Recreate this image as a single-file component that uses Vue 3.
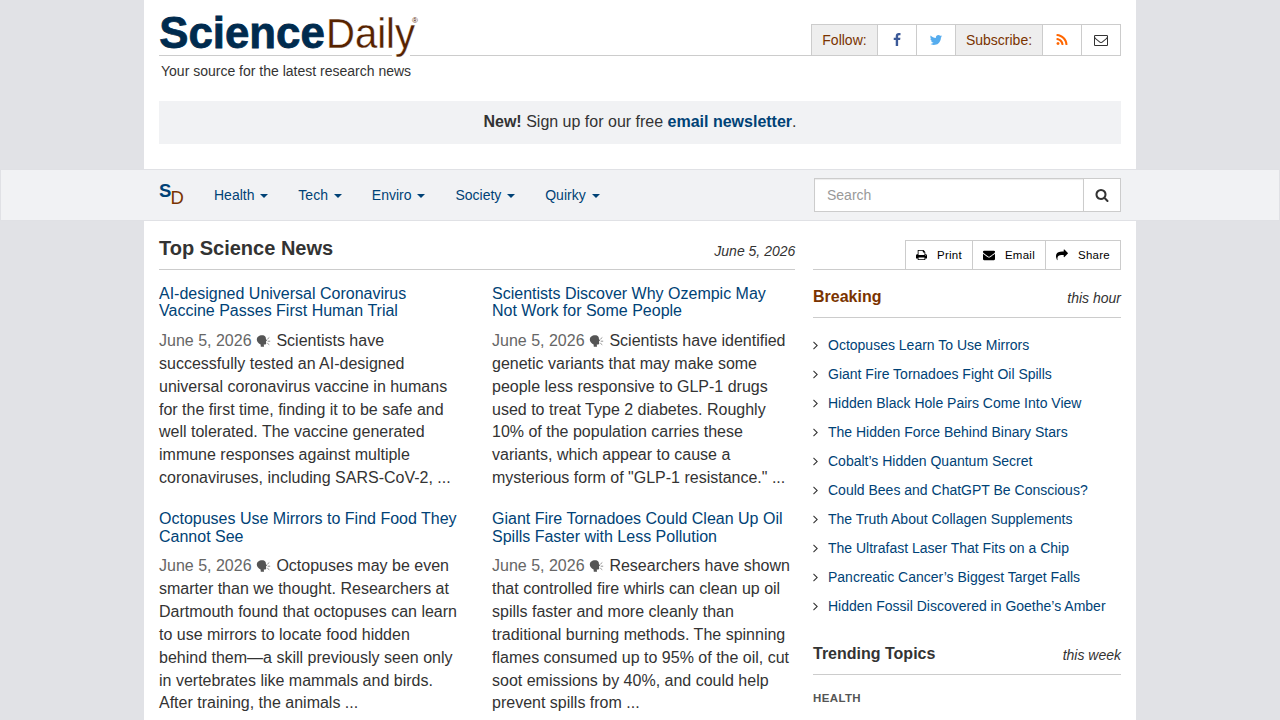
<script setup>
const icons = {
  facebook: 'M1343 12v264h-157q-86 0-116 36t-30 108v189h293l-39 296h-254v759h-306v-759h-255v-296h255v-218q0-186 104-288.500t277-102.500q147 0 228 12z',
  twitter: 'M1684 408q-67 98-162 167 1 14 1 42 0 130-38 259.500t-115.500 248.500-184.500 210.500-258 146-323 54.500q-271 0-496-145 35 4 78 4 225 0 401-138-105-2-188-64.500t-114-159.500q33 5 61 5 43 0 85-11-112-23-185.500-111.500t-73.500-205.500v-4q68 38 146 41-66-44-105-115t-39-154q0-88 44-163 121 149 294.500 238.500t371.500 99.500q-8-38-8-74 0-134 94.500-228.500t228.500-94.500q140 0 236 102 109-21 205-78-37 115-142 178 93-10 186-50z',
  rss: 'M576 1344q0 80-56 136t-136 56-136-56-56-136 56-136 136-56 136 56 56 136zm512 123q2 28-17 48-18 21-47 21h-135q-25 0-43-16.500t-20-41.500q-22-229-184.500-391.500t-391.500-184.500q-25-2-41.500-20t-16.500-43v-135q0-29 21-47 17-17 43-17h5q160 13 306 80.500t259 181.500q114 113 181.500 259t80.500 306zm512 2q2 27-18 47-18 20-46 20h-143q-26 0-44.500-17.500t-19.500-42.500q-12-215-101-408.500t-231.500-336-336-231.500-408.500-102q-25-1-42.500-19.500t-17.500-43.500v-143q0-28 20-46 18-18 44-18h3q262 13 501.500 120t425.500 294q187 186 294 425.500t120 501.500z',
  envelopeO: 'M1664 1504v-768q-32 36-69 66-268 206-426 338-51 43-83 67t-86.500 48.500-102.500 24.500h-2q-48 0-102.500-24.500t-86.500-48.500-83-67q-158-132-426-338-37-30-69-66v768q0 13 9.500 22.500t22.500 9.500h1472q13 0 22.500-9.500t9.500-22.500zm0-1051v-24.500l-.5-13-3-12.500-5.500-9-9-7.500-14-2.500h-1472q-13 0-22.500 9.500t-9.500 22.500q0 168 147 284 193 152 401 317 6 5 35 29.500t46 37.500 44.500 31.500 50.500 27.500 43 9h2q20 0 43-9t50.500-27.500 44.500-31.500 46-37.500 35-29.500q208-165 401-317 54-43 100.500-115.500t46.500-131.500zm128-37v1088q0 66-47 113t-113 47h-1472q-66 0-113-47t-47-113v-1088q0-66 47-113t113-47h1472q66 0 113 47t47 113z',
  search: 'M1216 832q0-185-131.500-316.500t-316.500-131.500-316.500 131.500-131.500 316.500 131.500 316.500 316.500 131.500 316.500-131.500 131.500-316.500zm512 832q0 52-38 90t-90 38q-54 0-90-38l-343-342q-179 124-399 124-143 0-273.500-55.500t-225-150-150-225-55.500-273.500 55.500-273.500 150-225 225-150 273.500-55.500 273.500 55.500 225 150 150 225 55.500 273.500q0 220-124 399l343 343q37 37 37 90z',
  print: 'M448 1536h896v-256h-896v256zm0-640h896v-384h-160q-40 0-68-28t-28-68v-160h-640v640zm1152 64q0-26-19-45t-45-19-45 19-19 45 19 45 45 19 45-19 19-45zm128 0v416q0 13-9.500 22.500t-22.500 9.500h-224v160q0 40-28 68t-68 28h-960q-40 0-68-28t-28-68v-160h-224q-13 0-22.500-9.500t-9.500-22.500v-416q0-79 56.500-135.500t135.500-56.500h64v-544q0-40 28-68t68-28h672q40 0 88 20t76 48l152 152q28 28 48 76t20 88v256h64q79 0 135.500 56.500t56.500 135.500z',
  envelope: 'M1792 710v794q0 66-47 113t-113 47h-1472q-66 0-113-47t-47-113v-794q44 49 101 87 362 246 497 345 57 42 92.500 65.500t94.500 48 110 24.500h2q51 0 110-24.500t94.500-48 92.500-65.500q170-123 498-345 57-39 100-87zm0-294q0 79-49 151t-122 123q-376 261-468 325-10 7-42.500 31t-54 38.500-52 32.500-57.500 27-50 9h-2q-23 0-50-9t-57.500-27-52-32.500-54-38.500-42.500-31q-91-64-262-182.500t-205-142.500q-62-42-117-115.500t-55-136.500q0-78 41.500-130t118.500-52h1472q65 0 112.500 47t47.500 113z',
  share: 'M1792 640q0 26-19 45l-512 512q-19 19-45 19t-45-19-19-45v-256h-224q-98 0-175.500 6t-154 21.500-133 42.500-105.500 69.500-80 101-48.500 138.500-17.500 181q0 55 5 123 0 6 2.500 23.500t2.500 26.500q0 15-8.500 25t-23.500 10q-16 0-28-17-7-9-13-22t-13.500-30-10.500-24q-127-285-127-451 0-199 53-333 162-403 875-403h224v-256q0-26 19-45t45-19 45 19l512 512q19 19 19 45z',
};

const menus = ['Health', 'Tech', 'Enviro', 'Society', 'Quirky'];

const tools = [
  { label: 'Print', icon: 'print' },
  { label: 'Email', icon: 'envelope' },
  { label: 'Share', icon: 'share' },
];

const stories = [
  {
    title: 'AI-designed Universal Coronavirus Vaccine Passes First Human Trial',
    text: 'Scientists have successfully tested an AI-designed universal coronavirus vaccine in humans for the first time, finding it to be safe and well tolerated. The vaccine generated immune responses against multiple coronaviruses, including SARS-CoV-2, ...',
  },
  {
    title: 'Scientists Discover Why Ozempic May Not Work for Some People',
    text: 'Scientists have identified genetic variants that may make some people less responsive to GLP-1 drugs used to treat Type 2 diabetes. Roughly 10% of the population carries these variants, which appear to cause a mysterious form of "GLP-1 resistance." ...',
  },
  {
    title: 'Octopuses Use Mirrors to Find Food They Cannot See',
    text: 'Octopuses may be even smarter than we thought. Researchers at Dartmouth found that octopuses can learn to use mirrors to locate food hidden behind them—a skill previously seen only in vertebrates like mammals and birds. After training, the animals ...',
  },
  {
    title: 'Giant Fire Tornadoes Could Clean Up Oil Spills Faster with Less Pollution',
    text: 'Researchers have shown that controlled fire whirls can clean up oil spills faster and more cleanly than traditional burning methods. The spinning flames consumed up to 95% of the oil, cut soot emissions by 40%, and could help prevent spills from ...',
  },
];

const breaking = [
  'Octopuses Learn To Use Mirrors',
  'Giant Fire Tornadoes Fight Oil Spills',
  'Hidden Black Hole Pairs Come Into View',
  'The Hidden Force Behind Binary Stars',
  'Cobalt’s Hidden Quantum Secret',
  'Could Bees and ChatGPT Be Conscious?',
  'The Truth About Collagen Supplements',
  'The Ultrafast Laser That Fits on a Chip',
  'Pancreatic Cancer’s Biggest Target Falls',
  'Hidden Fossil Discovered in Goethe’s Amber',
];
</script>

<template>
  <div class="page">
    <header class="container masthead">
      <div class="brand-row">
        <svg class="logo" width="262" height="60" viewBox="0 0 262 60">
          <rect class="logo-gap" x="233" y="54" width="18" height="3" />
          <text class="logo-science" x="0.300" y="48.300" textLength="165.500" lengthAdjust="spacingAndGlyphs">Science</text>
          <text class="logo-daily" x="167" y="47.800" textLength="89" lengthAdjust="spacingAndGlyphs">Daily</text>
          <text class="logo-mark" x="253" y="23">®</text>
        </svg>
        <div class="social">
          <span class="social-label follow">Follow:</span>
          <a class="social-btn"><svg class="icon facebook" viewBox="0 0 1792 1792"><path :d="icons.facebook" /></svg></a>
          <a class="social-btn"><svg class="icon twitter" viewBox="0 0 1792 1792"><path :d="icons.twitter" /></svg></a>
          <span class="social-label subscribe">Subscribe:</span>
          <a class="social-btn"><svg class="icon rss" viewBox="0 0 1792 1792"><path :d="icons.rss" /></svg></a>
          <a class="social-btn"><svg class="icon" viewBox="0 0 1792 1792"><path :d="icons.envelopeO" /></svg></a>
        </div>
      </div>
      <div class="tagline">Your source for the latest research news</div>
      <div class="notice"><p><b>New!</b> Sign up for our free <a>email newsletter</a>.</p></div>
    </header>

    <nav class="navbar">
      <div class="nav-inner">
        <a class="nav-logo"><b>S</b><span>D</span></a>
        <ul class="menu">
          <li v-for="m in menus" :key="m"><a>{{ m }} <span class="caret"></span></a></li>
        </ul>
        <form class="search" @submit.prevent>
          <input type="text" placeholder="Search" />
          <button type="submit"><svg class="icon" viewBox="0 0 1792 1792"><path :d="icons.search" /></svg></button>
        </form>
      </div>
    </nav>

    <main class="container content">
      <section class="news">
        <div class="news-head">
          <h1>Top Science News</h1>
          <em>June 5, 2026</em>
        </div>
        <div class="stories">
          <article v-for="s in stories" :key="s.title">
            <h3><a>{{ s.title }}</a></h3>
            <p>
              <span class="date">June 5, 2026 <svg class="talk" width="16" height="12" viewBox="0 0 16 12">
                <path d="M6 .2C9.200.2 10 2 9.900 3.800L11 5.700l-1 .6.2 2.200c0 1-1 .9-2.400.9L8 11.800H4.800L4.600 9.600C2.200 8.200.8 6.800.8 4.600.8 1.800 3 .2 6 .2z" />
                <path class="rays" d="M11.300 4.200l2-1.700M11.700 6.200h2.500M11.300 8.200l2 1.600" />
              </svg></span> {{ s.text }}
            </p>
          </article>
        </div>
      </section>

      <aside class="sidebar">
        <div class="tools-row">
          <div class="tools">
            <a v-for="t in tools" :key="t.label">
              <svg class="icon" :class="t.icon" :viewBox="t.icon === 'print' ? '64 0 1664 1792' : '0 0 1792 1792'"><path :d="icons[t.icon]" /></svg>
              <span>{{ t.label }}</span>
            </a>
          </div>
        </div>
        <div class="side-head hot">
          <h2>Breaking</h2>
          <em>this hour</em>
        </div>
        <ul class="links">
          <li v-for="b in breaking" :key="b">
            <svg class="angle" width="5" height="14" viewBox="560 0 640 1792"><path d="M1171 960q0 13-10 23l-466 466q-10 10-23 10t-23-10l-50-50q-10-10-10-23t10-23l393-393-393-393q-10-10-10-23t10-23l50-50q10-10 23-10t23 10l466 466q10 10 10 23z" /></svg>
            <a>{{ b }}</a>
          </li>
        </ul>
        <div class="side-head">
          <h2>Trending Topics</h2>
          <em>this week</em>
        </div>
        <div class="topic">HEALTH</div>
      </aside>
    </main>
  </div>
</template>

<style>
html,
body {
  background: #e1e2e6;
  overflow: hidden;
}
</style>

<style scoped>
* {
  box-sizing: border-box;
}

.page {
  height: 720px;
  overflow: hidden;
  font-family: "Liberation Sans", Arial, sans-serif;
  font-size: 14px;
  line-height: 20px;
  color: #333;
}

h1, h2, h3, p, ul {
  margin: 0;
  padding: 0;
}

ul {
  list-style: none;
}

a {
  color: #004276;
}

.icon {
  display: block;
  width: 14px;
  height: 14px;
  fill: currentColor;
}

.container {
  width: 992px;
  margin: 0 auto;
  padding: 0 15px;
  background: #fff;
}

.masthead {
  height: 169px;
}

.brand-row {
  display: flex;
  justify-content: space-between;
  height: 56px;
  padding-top: 24px;
  border-bottom: 1px solid #ccc;
}

.logo {
  margin-top: -24px;
  flex: none;
  overflow: visible;
}

.logo-gap {
  fill: #fff;
}

.logo-science {
  font-size: 44px;
  font-weight: bold;
  fill: #002b4e;
  stroke: #002b4e;
  stroke-width: 0.8px;
}

.logo-daily {
  font-size: 43px;
  fill: #562200;
  stroke: #fff;
  stroke-width: 0.300px;
}

.logo-mark {
  font-size: 8px;
  fill: #562200;
}

.social {
  display: flex;
  height: 32px;
  border: 1px solid #ccc;
}

.social-label {
  padding: 5px 0;
  text-align: center;
  background: #eee;
  color: #7a3300;
}

.follow {
  width: 65px;
}

.subscribe {
  width: 87px;
  border-left: 1px solid #ccc;
}

.social-btn {
  display: flex;
  align-items: center;
  justify-content: center;
  width: 39px;
  border-left: 1px solid #ccc;
  color: #333;
}

.facebook {
  color: #3b5998;
}

.twitter {
  color: #55acee;
}

.rss {
  color: #ff6600;
}

.tagline {
  padding: 5px 2px 0;
}

.notice {
  margin-top: 20px;
  height: 43px;
  padding-top: 10px;
  background: #f1f2f4;
  text-align: center;
  font-size: 16px;
  line-height: 22px;
}

.notice a {
  font-weight: bold;
}

.navbar {
  height: 52px;
  border: 1px solid #e0e1e5;
  background: #f1f2f4;
}

.nav-inner {
  display: flex;
  align-items: center;
  width: 962px;
  height: 50px;
  margin: 0 auto;
}

.nav-logo {
  display: flex;
  width: 40px;
  height: 50px;
  font-size: 18.500px;
}

.nav-logo b {
  width: 11.500px;
  padding-top: 11px;
}

.nav-logo span {
  padding-top: 18px;
  color: #7a3300;
}

.menu {
  display: flex;
  flex: 1;
}

.menu a {
  display: block;
  padding: 15px;
}

.caret {
  display: inline-block;
  margin-left: 2px;
  vertical-align: middle;
  border-top: 4px solid;
  border-right: 4px solid transparent;
  border-left: 4px solid transparent;
}

.search {
  display: flex;
  width: 307px;
  height: 34px;
  border: 1px solid #ccc;
  background: #fff;
}

.search input {
  flex: 1;
  min-width: 0;
  padding: 6px 12px;
  border: 0;
  background: none;
  box-shadow: inset 0 1px 1px rgba(0, 0, 0, 0.075);
  font: inherit;
}

.search input::placeholder {
  color: #999;
}

.search button {
  display: flex;
  align-items: center;
  justify-content: center;
  width: 37px;
  padding: 0;
  border: 0;
  border-left: 1px solid #ccc;
  background: #fff;
  color: #333;
}

.content {
  display: flex;
  justify-content: space-between;
  height: 499px;
}

.news {
  width: 636.300px;
}

.news-head {
  display: flex;
  justify-content: space-between;
  height: 49px;
  border-bottom: 1px solid #ccc;
}

.news-head h1 {
  padding-top: 16px;
  font-size: 20px;
  line-height: 22px;
}

.news-head em {
  padding-top: 20px;
}

.stories {
  display: grid;
  grid-template-columns: 302px 302px;
  column-gap: 31px;
  row-gap: 20.050px;
  padding-top: 14.700px;
}

.stories h3 {
  font-size: 16px;
  font-weight: normal;
  line-height: 17.600px;
}

.stories p {
  margin-top: 10.050px;
  font-size: 16px;
  line-height: 22.857px;
}

.date {
  color: #666;
}

.talk {
  fill: #555;
  vertical-align: -1px;
}

.rays {
  fill: none;
  stroke: #777;
  stroke-width: 0.8;
}

.sidebar {
  width: 308px;
}

.tools-row {
  display: flex;
  justify-content: flex-end;
  height: 49px;
  padding-top: 19px;
  border-bottom: 1px solid #ccc;
}

.tools {
  display: flex;
  border: 1px solid #ccc;
  border-bottom: 0;
}

.tools a {
  display: flex;
  align-items: center;
  gap: 10px;
  padding: 0 10px;
  color: #000;
  font-size: 11.490px;
  letter-spacing: 0.270px;
}

.tools a + a {
  border-left: 1px solid #ccc;
}

.tools .icon {
  width: 12px;
  height: 12px;
}

.tools .print {
  width: 11px;
}

.side-head {
  display: flex;
  justify-content: space-between;
  height: 48px;
  border-bottom: 1px solid #ccc;
}

.side-head h2 {
  padding-top: 18px;
  font-size: 16px;
  line-height: 18px;
}

.side-head em {
  padding-top: 18px;
}

.hot h2 {
  color: #7a3300;
}

.links {
  padding: 12px 0 7px;
}

.links li {
  display: flex;
  align-items: center;
  gap: 10px;
  height: 29px;
}

.angle {
  fill: #333;
}

.topic {
  padding-top: 13px;
  font-size: 11.490px;
  font-weight: bold;
  letter-spacing: 0.380px;
  color: #555;
}
</style>
